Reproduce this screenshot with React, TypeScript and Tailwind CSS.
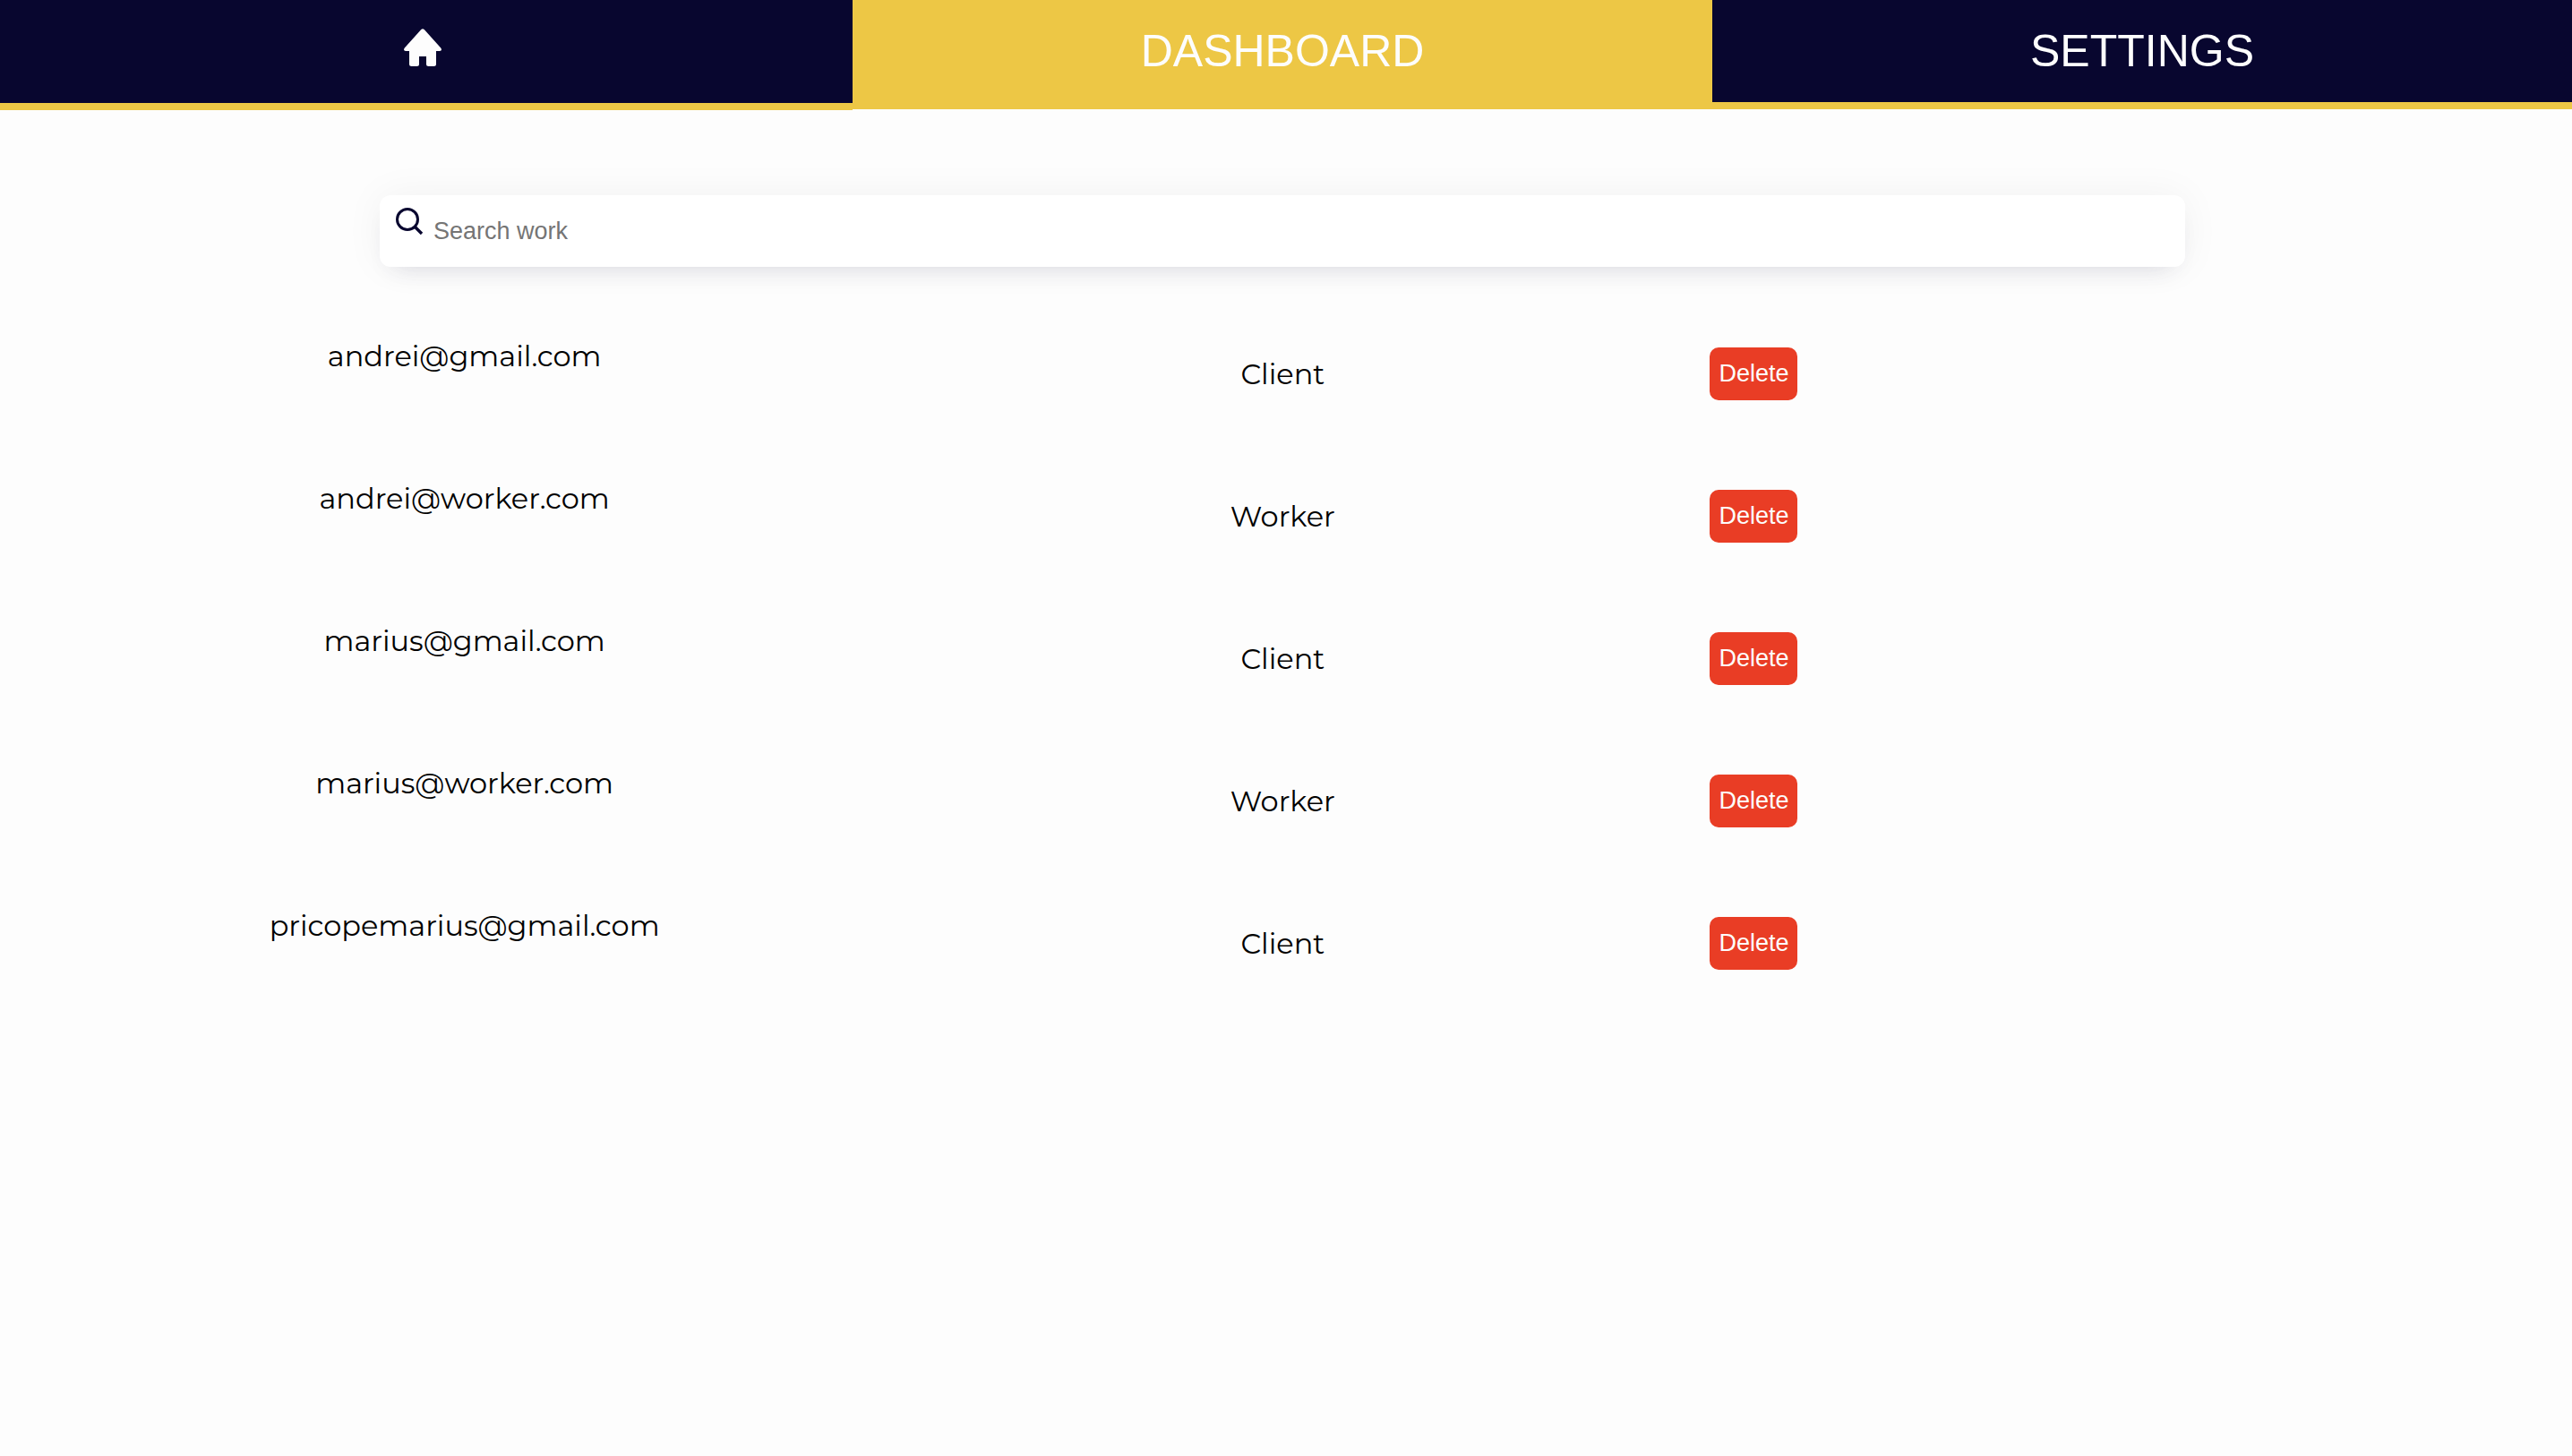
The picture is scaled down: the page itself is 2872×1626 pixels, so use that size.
type Account = { email: string; role: string };

const accounts: Account[] = [
  { email: "andrei@gmail.com", role: "Client" },
  { email: "andrei@worker.com", role: "Worker" },
  { email: "marius@gmail.com", role: "Client" },
  { email: "marius@worker.com", role: "Worker" },
  { email: "pricopemarius@gmail.com", role: "Client" },
];

function HomeIcon() {
  return (
    <svg viewBox="0 0 42 42" className="mr-2 h-[42px] w-[42px]" fill="currentColor" aria-hidden="true">
      <path d="M19 1.2Q21-.8 23 1.2L41.2 21.4Q42.6 23.2 41.4 24.6Q41 25 40 25H36V39.5Q36 42 33.5 42H27.5Q25 42 25 39.500V31H17V39.500Q17 42 14.500 42H8.500Q6 42 6 39.500V25H2Q1 25 .6 24.600Q-.6 23.200 .8 21.400Z" />
    </svg>
  );
}

function SearchIcon() {
  return (
    <svg viewBox="0 0 32 32" className="h-8 w-8" fill="none" stroke="#08062f" strokeWidth="3" aria-hidden="true">
      <circle cx="14" cy="14" r="11.500" />
      <path d="M22 22L30 30" strokeWidth="3.400" />
    </svg>
  );
}

function NavBar() {
  return (
    <nav className="flex items-start text-[50px] leading-[58px] text-[#fdfdfd]">
      <a
        href="#home"
        aria-label="Home"
        className="flex h-[123px] w-[33.15%] justify-center border-b-8 border-[#edc745] bg-[#08062f] pt-8"
      >
        <HomeIcon />
      </a>
      <a
        href="#dashboard"
        aria-current="page"
        className="flex-1 border-b-8 border-[#edc745] bg-[#edc745] py-7 text-center"
      >
        DASHBOARD
      </a>
      <a href="#settings" className="flex-1 border-b-8 border-[#edc745] bg-[#08062f] py-7 text-center">
        SETTINGS
      </a>
    </nav>
  );
}

function SearchBar() {
  return (
    <label className="mt-[95px] mr-2 flex h-20 w-[70.2%] items-start self-center rounded-xl bg-white pl-[17px] shadow-[0_14px_28px_-16px_rgba(50,50,93,0.18),0_0_44px_0_rgba(0,0,0,0.05)]">
      <span className="pt-[13px]">
        <SearchIcon />
      </span>
      <input
        type="text"
        aria-label="Search work"
        placeholder="Search work"
        className="h-20 flex-1 bg-transparent pl-[11px] text-[27px] text-black outline-none placeholder:text-[#757575]"
      />
    </label>
  );
}

function AccountTable() {
  return (
    <div className="mt-[57px] pl-[82px]">
      <table className="w-full table-fixed border-collapse font-['Montserrat','DejaVu_Sans',sans-serif] text-[32px] leading-10 text-black">
        <colgroup>
          <col className="w-[31.3%]" />
          <col className="w-[34.2%]" />
          <col />
        </colgroup>
        <tbody>
          {accounts.map((account) => (
            <tr key={account.email} className="h-[159px]">
              <td className="pt-[23px] text-center align-top">{account.email}</td>
              <td className="pt-[43px] text-center align-top">{account.role}</td>
              <td className="pt-[33px] align-top">
                <button
                  type="button"
                  aria-label={`Delete ${account.email}`}
                  className="block rounded-[10px] bg-[#e93d25] px-2.5 py-3.5 font-['Liberation_Sans',Arial,sans-serif] text-[27px] leading-[31px] text-[#fdfdfd]"
                >
                  Delete
                </button>
              </td>
            </tr>
          ))}
        </tbody>
      </table>
    </div>
  );
}

export default function App() {
  return (
    <div className="flex min-h-screen flex-col bg-[#fdfdfd] font-['Liberation_Sans',Arial,sans-serif]">
      <NavBar />
      <SearchBar />
      <AccountTable />
    </div>
  );
}
